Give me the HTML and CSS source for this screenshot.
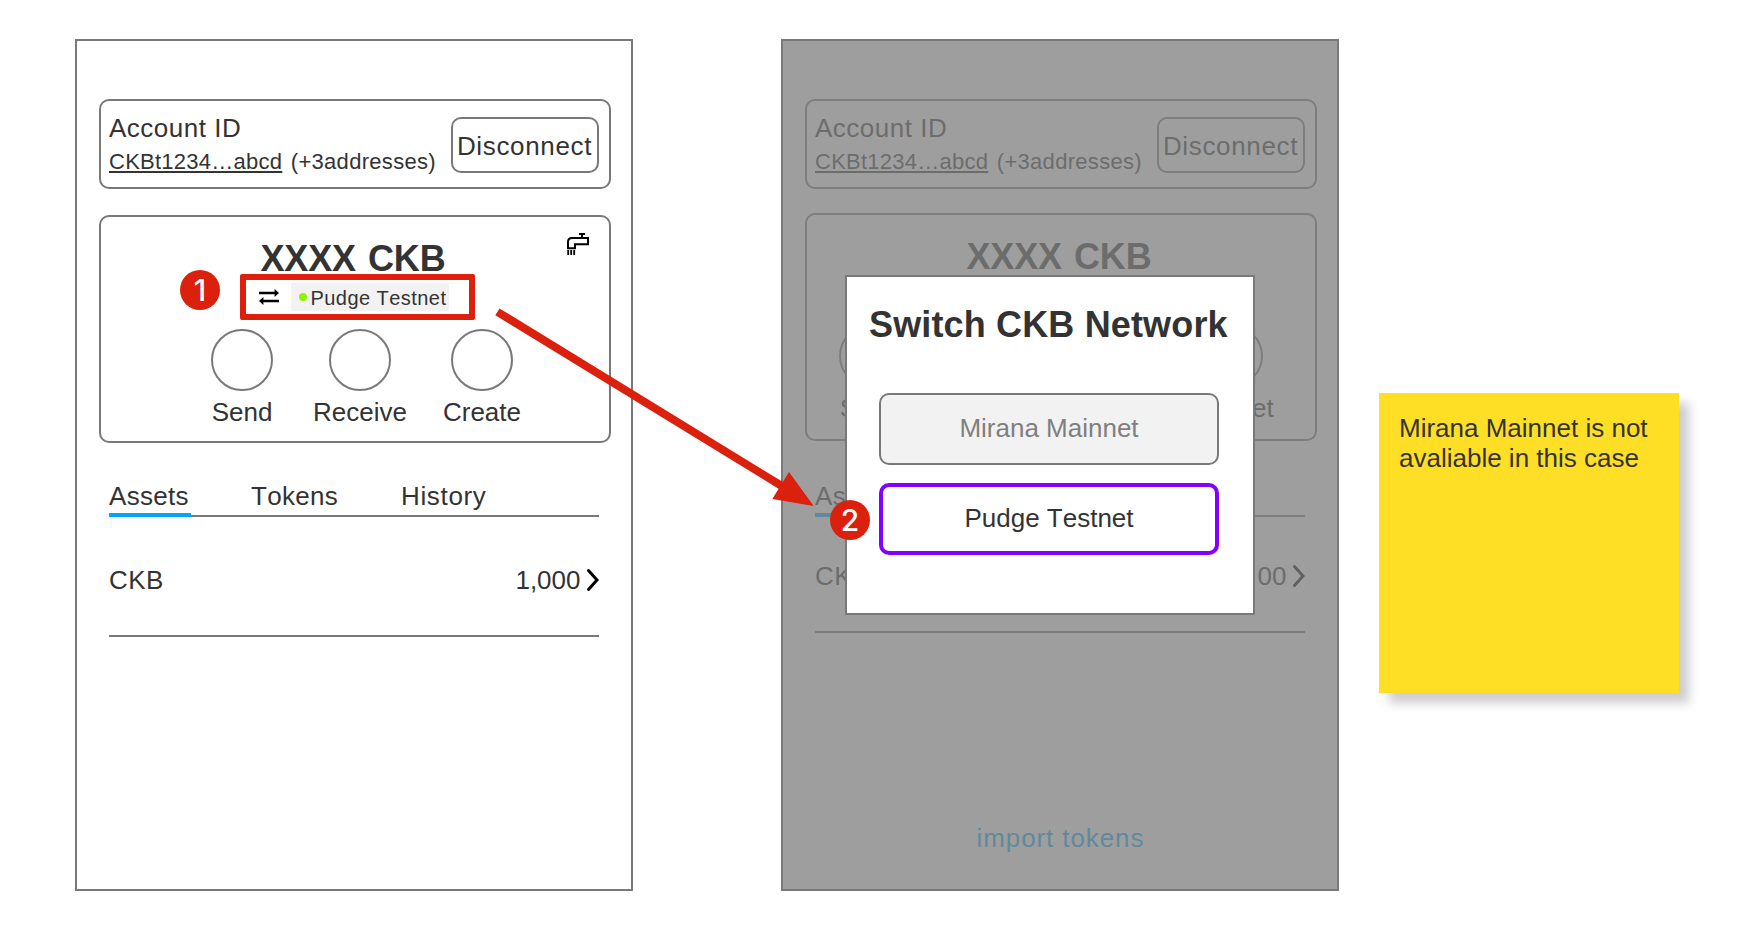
FILE: index.html
```html
<!DOCTYPE html>
<html lang="en">
<head>
<meta charset="utf-8">
<title>Switch CKB Network</title>
<link rel="stylesheet" href="styles.css">
</head>
<body>
<main class="board">
  <section class="phone">
    <div class="account">
      <div class="account-info">
        <div class="account-title">Account ID</div>
        <div class="account-line"><span class="account-address">CKBt1234…abcd</span><span class="account-more">(+3addresses)</span></div>
      </div>
      <button class="disconnect">Disconnect</button>
    </div>
    <div class="balance">
      <svg class="faucet" width="22" height="22" viewBox="0 0 22 22" fill="none" stroke="#000" stroke-width="2">
        <path d="M12 1H18M15 1V5M1 15.2V9Q1 5 5 5H21V11.2H8V15.2Z"/>
        <path d="M1.2 17V22M4.2 17V22M7.2 17V22" stroke-width="1.8"/>
      </svg>
      <h1 class="amount">XXXX CKB</h1>
      <div class="network">
        <svg class="swap" width="20" height="16" viewBox="0 0 20 16" fill="#000">
          <path d="M0 2.7H15.6V0L20 4L15.6 8V5.3H0ZM20 13.3H4.4V16L0 12L4.4 8V10.7H20Z"/>
        </svg>
        <span class="chip"><i class="dot"></i><span class="chip-label">Pudge Testnet</span></span>
      </div>
      <div class="actions">
        <div class="action"><span class="ring"></span>Send</div>
        <div class="action"><span class="ring"></span>Receive</div>
        <div class="action"><span class="ring"></span>Create</div>
      </div>
    </div>
    <nav class="tabs">
      <span class="tab tab-active">Assets</span>
      <span class="tab tab-tokens">Tokens</span>
      <span class="tab tab-history">History</span>
    </nav>
    <div class="asset">
      <span class="asset-name">CKB</span>
      <span class="asset-value">1,000</span>
      <svg class="chevron" width="12" height="22" viewBox="0 0 12 22" fill="none" stroke="#000" stroke-width="3" stroke-linecap="round"><path d="M1.5 1.6L10 11L1.5 20.4"/></svg>
    </div>
  </section>

  <section class="phone phone-dimmed">
    <div class="account">
      <div class="account-info">
        <div class="account-title">Account ID</div>
        <div class="account-line"><span class="account-address">CKBt1234…abcd</span><span class="account-more">(+3addresses)</span></div>
      </div>
      <button class="disconnect">Disconnect</button>
    </div>
    <div class="balance">
      <h1 class="amount">XXXX CKB</h1>
      <div class="network"></div>
      <div class="actions">
        <div class="action"><span class="ring"></span>Send</div>
        <div class="action"><span class="ring"></span><span class="action-label">Market</span></div>
      </div>
    </div>
    <nav class="tabs">
      <span class="tab tab-active">Assets</span>
    </nav>
    <div class="asset">
      <span class="asset-name">CKB</span>
      <span class="asset-value">00</span>
      <svg class="chevron" width="12" height="22" viewBox="0 0 12 22" fill="none" stroke="#000" stroke-width="3" stroke-linecap="round"><path d="M1.5 1.6L10 11L1.5 20.4"/></svg>
    </div>
    <a class="import">import tokens</a>
    <div class="scrim"></div>
    <div class="modal">
      <h2 class="modal-title">Switch CKB Network</h2>
      <button class="choice choice-disabled">Mirana Mainnet</button>
      <button class="choice choice-selected">Pudge Testnet</button>
    </div>
  </section>

  <aside class="sticky">Mirana Mainnet is not avaliable in this case</aside>

  <div class="highlight"></div>
  <svg class="arrow" width="330" height="210" viewBox="490 300 330 210">
    <path d="M497.4 311.8L785 488" stroke="#db200d" stroke-width="8" fill="none"/>
    <path d="M813.7 506L789 472L772.3 499Z" fill="#db200d"/>
  </svg>
  <span class="badge badge-one">1</span>
  <span class="badge badge-two">2</span>
</main>
</body>
</html>
```

FILE: styles.css
```css
* {
  box-sizing: border-box;
}

body {
  margin: 0;
  background: #fff;
  color: #333;
  font: 26px/30px "Liberation Sans", Arial, sans-serif;
  font-kerning: none;
}

h1,
h2 {
  margin: 0;
  font-size: 36px;
  line-height: 42px;
}

button {
  padding: 0;
  background: none;
  border: 2px solid #797979;
  border-radius: 10px;
  color: inherit;
  font: inherit;
  font-kerning: none;
  white-space: nowrap;
}

svg {
  display: block;
  flex: none;
}

.board {
  position: relative;
  display: flex;
  align-items: flex-start;
  width: 1752px;
  height: 932px;
  padding: 39px 0 0 75px;
  overflow: hidden;
}

.phone {
  position: relative;
  display: flex;
  flex: none;
  flex-direction: column;
  width: 558px;
  height: 852px;
  padding: 58px 20px 36px 22px;
  border: 2px solid #797979;
}

.phone-dimmed {
  margin-left: 148px;
}

.account {
  display: flex;
  flex: none;
  align-items: flex-start;
  justify-content: space-between;
  width: 512px;
  height: 90px;
  padding: 12px 10px 0 8px;
  border: 2px solid #797979;
  border-radius: 10px;
  white-space: nowrap;
}

.account-title {
  letter-spacing: 0.5px;
}

.account-line {
  display: flex;
  gap: 8.5px;
  margin-top: 6px;
  font-size: 22px;
  line-height: 26px;
}

.account-address {
  letter-spacing: 0.25px;
  text-decoration: underline;
  text-decoration-thickness: 2px;
  text-decoration-skip-ink: none;
  text-underline-offset: 2px;
}

.account-more {
  letter-spacing: 0.3px;
}

.disconnect {
  width: 148px;
  height: 56px;
  margin-top: 4px;
  padding: 2px 1px 0 0;
  letter-spacing: 0.65px;
}

.balance {
  position: relative;
  flex: none;
  width: 512px;
  height: 228px;
  margin-top: 26px;
  padding-top: 21px;
  border: 2px solid #797979;
  border-radius: 10px;
}

.phone-dimmed .balance {
  margin-top: 24px;
}

.faucet {
  position: absolute;
  top: 16px;
  right: 20px;
}

.amount {
  padding-right: 4px;
  letter-spacing: -0.1px;
  word-spacing: 2px;
  text-align: center;
}

.network {
  display: flex;
  align-items: center;
  gap: 12px;
  height: 28px;
  margin-top: 3px;
  padding-left: 158px;
}

.chip {
  display: flex;
  align-items: center;
  gap: 3.5px;
  width: 158px;
  height: 28px;
  padding-left: 8px;
  background: #f2f2f2;
  font-size: 20px;
  line-height: 26px;
  letter-spacing: 0.45px;
  white-space: nowrap;
}

.chip-label {
  padding-top: 2px;
}

.dot {
  flex: none;
  width: 8px;
  height: 8px;
  border-radius: 50%;
  background: #95f204;
}

.actions {
  display: grid;
  grid-template-columns: 120px 116px 128px;
  margin-top: 18px;
  padding-left: 81px;
}

.phone-dimmed .actions {
  grid-template-columns: 120px 118px;
  margin-top: 16px;
  padding-left: 3px;
  column-gap: 243px;
}

.action {
  display: flex;
  flex-direction: column;
  align-items: center;
  gap: 6px;
}

.action-label {
  padding-left: 4px;
}

.ring {
  width: 62px;
  height: 62px;
  border: 2px solid #797979;
  border-radius: 50%;
}

.tabs {
  display: flex;
  flex: none;
  width: 490px;
  height: 36px;
  margin: 38px 0 0 10px;
  border-bottom: 2px solid #797979;
}

.phone-dimmed .tabs {
  margin-top: 40px;
}

.tab {
  letter-spacing: 0.3px;
}

.tab-active {
  position: relative;
  width: 142px;
}

.tab-active::after {
  content: "";
  position: absolute;
  bottom: -2px;
  left: 0;
  width: 82px;
  height: 4px;
  background: #02a7f0;
}

.tab-tokens {
  width: 150px;
}

.tab-history {
  letter-spacing: 0.65px;
}

.asset {
  display: flex;
  flex: none;
  width: 490px;
  height: 120px;
  margin-left: 10px;
  padding-top: 48px;
  border-bottom: 2px solid #797979;
}

.phone-dimmed .asset {
  height: 116px;
  padding-top: 44px;
}

.asset-name {
  flex: 1;
  letter-spacing: 0.5px;
}

.chevron {
  margin: 4px 0 0 6.5px;
}

.import {
  margin-top: auto;
  padding-right: 1px;
  color: #02a7f0;
  letter-spacing: 0.9px;
  text-align: center;
}

.scrim {
  position: absolute;
  inset: 0;
  background: rgba(127, 127, 127, 0.755);
}

.modal {
  position: absolute;
  top: 234px;
  left: 62px;
  display: flex;
  flex-direction: column;
  align-items: flex-start;
  width: 410px;
  height: 340px;
  padding: 27px 0 0 32px;
  background: #fff;
  border: 2px solid #797979;
}

.modal-title {
  margin: 0 0 47px -10px;
  letter-spacing: 0.15px;
  white-space: nowrap;
}

.choice {
  width: 340px;
  height: 72px;
  margin-bottom: 18px;
  padding-bottom: 2px;
}

.choice-disabled {
  background: #f2f2f2;
  color: #7f7f7f;
}

.choice-selected {
  border: 4px solid #8400ff;
}

.sticky {
  flex: none;
  width: 300px;
  height: 300px;
  margin: 354px 0 0 40px;
  padding: 20px 18px 0 20px;
  background: #ffdf25;
  box-shadow: 10px 10px 10px rgba(0, 0, 0, 0.2);
}

.highlight {
  position: absolute;
  top: 273.5px;
  left: 240px;
  width: 235px;
  height: 46px;
  border: 6px solid #db200d;
  border-radius: 2px;
}

.arrow {
  position: absolute;
  top: 300px;
  left: 490px;
}

.badge {
  position: absolute;
  width: 40px;
  height: 40px;
  border-radius: 50%;
  background: #db200d;
  color: #fff;
  font: 500 30px/40px Inter, "Liberation Sans", sans-serif;
  text-align: center;
}

.badge-one {
  top: 269.5px;
  left: 180px;
}

.badge-two {
  top: 500px;
  left: 830px;
}
```
